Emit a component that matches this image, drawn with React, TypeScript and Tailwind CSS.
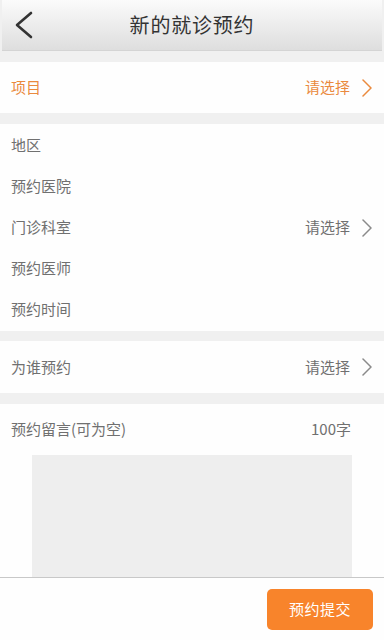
import React from "react";

const font = { fontFamily: '"Noto Sans CJK SC", "Noto Sans", sans-serif' };

function Chevron({ color }: { color: string }) {
  return (
    <svg width="12" height="18" viewBox="0 0 12 18" fill="none">
      <path d="M2 1 L10 9 L2 17" stroke={color} strokeWidth="1.5" strokeLinecap="round" strokeLinejoin="round" />
    </svg>
  );
}

function Row({ label, value, orange, h = "h-[41px]" }: { label: string; value?: string; orange?: boolean; h?: string }) {
  const c = orange ? "text-[#ea8a3e]" : "text-[#707070]";
  return (
    <div className={`flex items-center justify-between pl-[11px] pr-[11px] ${h}`}>
      <span className={`text-[15px] ${c}`}>{label}</span>
      {value && (
        <div className="flex items-center gap-[11px]">
          <span className={`text-[15px] ${c}`}>{value}</span>
          <Chevron color={orange ? "#ea8a3e" : "#8a8a8a"} />
        </div>
      )}
    </div>
  );
}

export default function App() {
  return (
    <div className="w-[384px] h-[640px] bg-[#f0f0f0] flex flex-col overflow-hidden" style={font}>
      <div className="h-[51px] mx-[2px] bg-gradient-to-b from-[#fbfbfb] to-[#dedede] border-b border-[#d4d4d4] flex items-center relative">
        <svg className="absolute left-[11px] top-[11px]" width="22" height="28" viewBox="0 0 22 28" fill="none">
          <path d="M18 2 L4 14 L18 26" stroke="#333" strokeWidth="2.6" strokeLinecap="round" strokeLinejoin="round" />
        </svg>
        <div className="flex-1 text-center text-[20px] text-[#333] tracking-[0.8px]">新的就诊预约</div>
      </div>
      <div className="h-[11px]" />
      <div className="bg-[#fefefe]">
        <Row label="项目" value="请选择" orange h="h-[51px]" />
      </div>
      <div className="h-[11px]" />
      <div className="bg-[#fefefe] py-[1px]">
        <Row label="地区" />
        <Row label="预约医院" />
        <Row label="门诊科室" value="请选择" />
        <Row label="预约医师" />
        <Row label="预约时间" />
      </div>
      <div className="h-[10px]" />
      <div className="bg-[#fefefe]">
        <Row label="为谁预约" value="请选择" h="h-[52px]" />
      </div>
      <div className="h-[11px]" />
      <div className="bg-[#fefefe] flex-1 flex flex-col">
        <div className="flex items-center justify-between pl-[11px] pr-[33px] h-[51px]">
          <span className="text-[15px] text-[#707070]">预约留言(可为空)</span>
          <span className="text-[15px] text-[#707070]">100字</span>
        </div>
        <div className="mx-[32px] w-[320px] flex-1 bg-[#eeeeee]" />
      </div>
      <div className="h-[63px] bg-[#fefefe] border-t border-[#c8c8c8] flex items-center justify-end pr-[11px]">
        <button className="w-[106px] h-[41px] rounded-[5px] bg-[#f8842b] text-white text-[15px] tracking-[0.5px]">预约提交</button>
      </div>
    </div>
  );
}
